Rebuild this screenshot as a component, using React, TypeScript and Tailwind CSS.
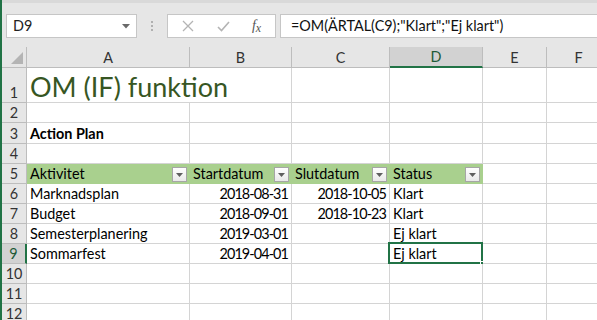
import React from "react";

const FONT = { fontFamily: "Lato, 'Open Sans', sans-serif" };

const cols = [
  { key: "A", w: 163 },
  { key: "B", w: 102 },
  { key: "C", w: 98 },
  { key: "D", w: 93 },
  { key: "E", w: 64 },
  { key: "F", w: 64 },
];

function FilterBtn() {
  return (
    <div className="absolute right-[2px] bottom-[1px] w-[15px] h-[15px] border border-[#a6a6a6] bg-gradient-to-b from-white to-[#e9e9e9] flex items-center justify-center">
      <svg width="7" height="4" viewBox="0 0 7 4">
        <polygon points="0,0 7,0 3.5,4" fill="#5f5f5f" />
      </svg>
    </div>
  );
}

type Cell = { text?: string; align?: "left" | "right"; bold?: boolean };

const rows: { h: number; cells: Cell[]; header?: boolean }[] = [
  { h: 35, cells: [] },
  { h: 20, cells: [] },
  { h: 21, cells: [{ text: "Action Plan", bold: true }] },
  { h: 20, cells: [] },
  {
    h: 20,
    header: true,
    cells: [{ text: "Aktivitet" }, { text: "Startdatum" }, { text: "Slutdatum" }, { text: "Status" }],
  },
  {
    h: 20,
    cells: [
      { text: "Marknadsplan" },
      { text: "2018-08-31", align: "right" },
      { text: "2018-10-05", align: "right" },
      { text: "Klart" },
    ],
  },
  {
    h: 20,
    cells: [
      { text: "Budget" },
      { text: "2018-09-01", align: "right" },
      { text: "2018-10-23", align: "right" },
      { text: "Klart" },
    ],
  },
  {
    h: 20,
    cells: [
      { text: "Semesterplanering" },
      { text: "2019-03-01", align: "right" },
      {},
      { text: "Ej klart" },
    ],
  },
  {
    h: 20,
    cells: [{ text: "Sommarfest" }, { text: "2019-04-01", align: "right" }, {}, { text: "Ej klart" }],
  },
  { h: 20, cells: [] },
  { h: 20, cells: [] },
  { h: 20, cells: [] },
];

export default function App() {
  return (
    <div className="w-[597px] h-[320px] overflow-hidden bg-white flex" style={FONT}>
      <div className="w-[2px] shrink-0 bg-[#217346]" />
      <div className="flex-1 flex flex-col min-w-0">
        {/* Formula bar */}
        <div className="h-[47px] shrink-0 bg-[#e6e6e6] border-t-[3px] border-[#d9d9d9] flex items-start pt-[11px] pl-[4px]">
          <div className="w-[131px] h-[24px] bg-white border border-[#c6c6c6] flex items-center pl-[6px] pr-[6px] text-[14.4px] text-[#222]">
            <span className="flex-1">D9</span>
            <svg width="8" height="5" viewBox="0 0 8 5">
              <polygon points="0,0 8,0 4,4.5" fill="#6a6a6a" />
            </svg>
          </div>
          <div className="w-[30px] h-[24px] flex flex-col items-center justify-center gap-[2px]">
            <div className="w-[2px] h-[2px] bg-[#b0b0b0]" />
            <div className="w-[2px] h-[2px] bg-[#b0b0b0]" />
            <div className="w-[2px] h-[2px] bg-[#b0b0b0]" />
          </div>
          <div className="w-[109px] h-[24px] bg-white border border-[#c6c6c6] flex items-center">
            <div className="w-[40px] flex justify-center">
              <svg width="12" height="12" viewBox="0 0 12 12">
                <path d="M1 1 L11 11 M11 1 L1 11" stroke="#b4b4b4" strokeWidth="1.3" />
              </svg>
            </div>
            <div className="w-[30px] flex justify-center">
              <svg width="13" height="11" viewBox="0 0 13 11">
                <path d="M1 6 L4.5 9.5 L12 1" stroke="#b4b4b4" strokeWidth="1.6" fill="none" />
              </svg>
            </div>
            <div
              className="flex-1 flex justify-center italic text-[14px] text-[#555] leading-none"
              style={{ fontFamily: "'Liberation Serif', serif" }}
            >
              <span>f</span>
              <span className="text-[12px] mt-[3px]">x</span>
            </div>
          </div>
          <div className="ml-[4px] flex-1 h-[24px] bg-white border border-[#c6c6c6] border-r-0 flex items-center pl-[10px] text-[14.4px] text-[#111] whitespace-nowrap">
            =OM(ÄRTAL(C9);"Klart";"Ej klart")
          </div>
        </div>

        {/* Grid */}
        <div className="flex flex-col">
          {/* column headers */}
          <div className="flex h-[21px] shrink-0">
            <div className="w-[25px] shrink-0 bg-[#e6e6e6] border-r border-b border-[#bdbdbd] relative">
              <svg className="absolute left-[9px] top-[5px]" width="12" height="12" viewBox="0 0 12 12">
                <polygon points="12,0 12,12 0,12" fill="#b4b4b4" />
              </svg>
            </div>
            {cols.map((c) => {
              const sel = c.key === "D";
              return (
                <div
                  key={c.key}
                  style={{ width: c.w }}
                  className={
                    sel
                      ? "shrink-0 bg-[#d2d2d2] border-r border-[#bdbdbd] border-b-2 border-b-[#217346] flex items-center justify-center pt-[1px] text-[14.4px] text-[#1e5a38]"
                      : "shrink-0 bg-[#e6e6e6] border-r border-b border-[#bdbdbd] flex items-center justify-center pt-[2px] text-[14.4px] text-[#333]"
                  }
                >
                  {c.key}
                </div>
              );
            })}
          </div>
          {rows.map((r, ri) => {
            const rn = ri + 1;
            const selRow = rn === 9;
            return (
              <div key={rn} className="flex shrink-0" style={{ height: r.h }}>
                <div
                  className={
                    selRow
                      ? "w-[25px] shrink-0 bg-[#d2d2d2] border-b border-[#bdbdbd] border-r-2 border-r-[#217346] flex items-end justify-center text-[14.4px] text-[#1e5a38] leading-[18px]"
                      : "w-[25px] shrink-0 bg-[#e6e6e6] border-r border-b border-[#bdbdbd] flex items-end justify-center text-[14.4px] text-[#333] leading-[18px]"
                  }
                >
                  {rn}
                </div>
                {rn === 1 ? (
                  <>
                    <div
                      style={{ width: 163 + 102 }}
                      className="shrink-0 border-r border-b border-[#d4d4d4] flex items-end pl-[3px] text-[27px] leading-[30px] text-[#375623] whitespace-nowrap"
                    >
                      OM (IF) funktion
                    </div>
                    {cols.slice(2).map((c) => (
                      <div
                        key={c.key}
                        style={{ width: c.w }}
                        className="shrink-0 border-r border-b border-[#d4d4d4]"
                      />
                    ))}
                  </>
                ) : (
                  cols.map((c, ci) => {
                    const cell = r.cells[ci] || {};
                    const green = r.header && ci < 4;
                    const isSel = rn === 9 && c.key === "D";
                    return (
                      <div
                        key={c.key}
                        style={{ width: c.w }}
                        className={
                          (green ? "bg-[#a9d08e] border-[#a9d08e] " : "bg-white border-[#d4d4d4] ") +
                          "relative shrink-0 border-r border-b flex items-end px-[3px] text-[14.4px] leading-[18px] text-black whitespace-nowrap " +
                          (cell.align === "right" ? "justify-end tracking-[-0.9px] " : "justify-start ") +
                          (cell.bold ? "font-bold " : "")
                        }
                      >
                        {cell.text}
                        {r.header && ci < 4 && <FilterBtn />}
                        {isSel && (
                          <>
                            <div className="absolute -left-[2px] -top-[2px] -right-[1px] -bottom-[1px] border-2 border-[#217346] pointer-events-none" />
                            <div className="absolute -right-[4px] -bottom-[4px] w-[6px] h-[6px] bg-[#217346] border border-white" />
                          </>
                        )}
                      </div>
                    );
                  })
                )}
              </div>
            );
          })}
        </div>
      </div>
    </div>
  );
}
